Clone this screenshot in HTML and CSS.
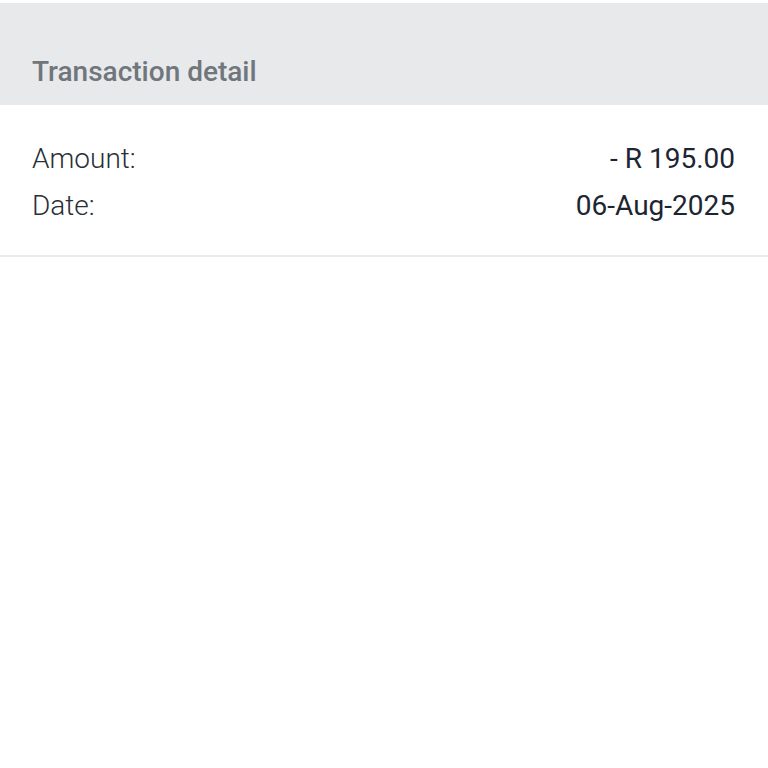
FILE: index.html
```html
<!DOCTYPE html>
<html lang="en">
<head>
  <meta charset="UTF-8">
  <meta name="viewport" content="width=device-width, initial-scale=1.0">
  <title>Transaction detail</title>
  <link rel="stylesheet" href="styles.css">
</head>
<body>
<div class="detail-header">
  <h1>Transaction detail</h1>
</div>
<div class="detail-body">
  <div class="detail-row">
    <span class="detail-label">Amount:</span>
    <span class="detail-value">- R 195.00</span>
  </div>
  <div class="detail-row">
    <span class="detail-label">Date:</span>
    <span class="detail-value">06-Aug-2025</span>
  </div>
</div>
</body>
</html>
```

FILE: styles.css
```css
body {
  font-family: Roboto, "Liberation Sans", sans-serif;
  background-color: #fff;
  margin: 0;
  padding: 3px 0 0 0;
}
.detail-header {
  background-color: #e8e9eb;
  height: 102px;
  padding: 0 32px;
  box-sizing: border-box;
  display: flex;
  align-items: flex-end;
}
.detail-header h1 {
  margin: 0 0 18px 0;
  font-size: 28px;
  font-weight: 500;
  color: #6f767c;
  line-height: 30px;
}
.detail-body {
  padding: 30px 33px 26px 32px;
  border-bottom: 2px solid #ebebeb;
}
.detail-row {
  display: flex;
  justify-content: space-between;
  font-size: 28px;
  line-height: 47px;
}
.detail-label {
  font-weight: 300;
  color: #2a2f36;
}
.detail-value {
  font-weight: 400;
  color: #1c2531;
}
```
